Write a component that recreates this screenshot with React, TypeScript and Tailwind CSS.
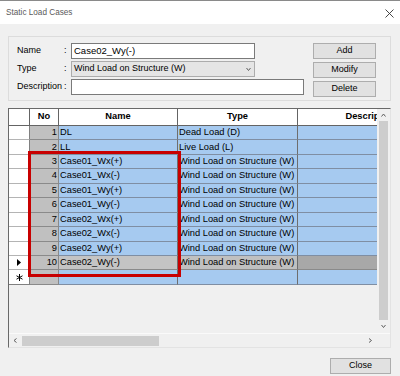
const rows = [
  { no: 1, name: "DL", type: "Dead Load (D)" },
  { no: 2, name: "LL", type: "Live Load (L)" },
  { no: 3, name: "Case01_Wx(+)", type: "Wind Load on Structure (W)" },
  { no: 4, name: "Case01_Wx(-)", type: "Wind Load on Structure (W)" },
  { no: 5, name: "Case01_Wy(+)", type: "Wind Load on Structure (W)" },
  { no: 6, name: "Case01_Wy(-)", type: "Wind Load on Structure (W)" },
  { no: 7, name: "Case02_Wx(+)", type: "Wind Load on Structure (W)" },
  { no: 8, name: "Case02_Wx(-)", type: "Wind Load on Structure (W)" },
  { no: 9, name: "Case02_Wy(+)", type: "Wind Load on Structure (W)" },
  { no: 10, name: "Case02_Wy(-)", type: "Wind Load on Structure (W)", sel: true },
];

function Chevron({ dir, className }: { dir: "up" | "down" | "left" | "right"; className?: string }) {
  const d = {
    up: "M0.5 3.5 L2.5 1 L4.5 3.5",
    down: "M0.5 1 L2.5 3.5 L4.5 1",
    left: "M3.5 0.5 L1 2.5 L3.5 4.5",
    right: "M1 0.5 L3.5 2.5 L1 4.5",
  }[dir];
  return (
    <svg width="5" height="5" viewBox="0 0 5 5" className={className}>
      <path d={d} fill="none" stroke="#606060" strokeWidth="1" />
    </svg>
  );
}

function Btn({ label, className }: { label: string; className?: string }) {
  return (
    <div
      className={`h-[16px] bg-[#e1e1e1] border border-[#adadad] flex items-center justify-center text-[9px] text-black ${className ?? ""}`}
    >
      {label}
    </div>
  );
}

export default function App() {
  return (
    <div className="w-[400px] h-[376px] bg-[#f0f0f0] flex flex-col overflow-hidden border-t border-[#8a8a8a] font-['Liberation_Sans',Arial,sans-serif]">
      {/* title bar */}
      <div className="h-[23px] bg-white flex items-center justify-between pl-[6px] pr-[6px] shrink-0">
        <span className="text-[8.2px] text-[#5a5a5a] mt-[1px]">Static Load Cases</span>
        <svg width="9" height="9" viewBox="0 0 9 9" className="mt-[1px]">
          <path d="M0.5 0.5 L8.5 8.5 M8.5 0.5 L0.5 8.5" stroke="#333" strokeWidth="0.9" />
        </svg>
      </div>

      <div className="flex-1 flex flex-col pl-[8px] pr-[9px]">
        {/* input group */}
        <div className="mt-[12px] h-[65px] border border-[#dcdcdc] flex pt-[6px] pl-[8px] pr-[14px]">
          <div className="flex flex-col gap-[2px] text-[9px] text-black">
            <div className="h-[16px] flex items-center">
              <span className="w-[47px]">Name</span>
              <span className="w-[7px]">:</span>
              <div className="w-[184px] h-[16px] bg-white border border-[#7a7a7a] flex items-center pl-[2px] text-[9.5px]">
                Case02_Wy(-)
              </div>
            </div>
            <div className="h-[16px] flex items-center">
              <span className="w-[47px]">Type</span>
              <span className="w-[7px]">:</span>
              <div className="w-[184px] h-[16px] bg-[#e5e5e5] border border-[#acacac] flex items-center justify-between pl-[2px] pr-[3px]">
                <span>Wind Load on Structure (W)</span>
                <Chevron dir="down" />
              </div>
            </div>
            <div className="h-[16px] flex items-center">
              <span className="w-[47px]">Description</span>
              <span className="w-[7px]">:</span>
              <div className="w-[233px] h-[16px] bg-white border border-[#7a7a7a]" />
            </div>
          </div>
          <div className="ml-auto flex flex-col gap-[3px] w-[63px]">
            <Btn label="Add" />
            <Btn label="Modify" />
            <Btn label="Delete" />
          </div>
        </div>

        {/* grid */}
        <div className="relative mt-[7px] h-[240px] border-t border-l border-[#696969] border-r border-b border-r-[#e3e3e3] border-b-[#e3e3e3] flex flex-col">
          <div className="flex h-[224px]">
            <div className="flex-1 overflow-hidden text-[9.3px] text-black">
              {/* header */}
              <div className="flex h-[17px]">
                <div className="w-[21px] shrink-0 bg-white border-r border-b border-[#646464]" />
                <div className="w-[29px] shrink-0 bg-white border-r border-b border-[#646464] flex items-center justify-center font-bold">No</div>
                <div className="w-[119px] shrink-0 bg-white border-r border-b border-[#646464] flex items-center justify-center font-bold">Name</div>
                <div className="w-[120px] shrink-0 bg-white border-r border-b border-[#646464] flex items-center justify-center font-bold">Type</div>
                <div className="w-[147px] shrink-0 bg-white border-r border-b border-[#646464] flex items-center justify-center font-bold">Description</div>
              </div>
              {rows.map((r) => (
                <div key={r.no} className="flex h-[14.44px] leading-none">
                  <div className="w-[21px] shrink-0 bg-white border-r border-b border-r-[#808080] border-b-[#b4b4b4] flex items-center justify-center">
                    {r.sel && (
                      <svg width="4" height="7" viewBox="0 0 4 7">
                        <path d="M0 0 L4 3.5 L0 7 Z" fill="#000" />
                      </svg>
                    )}
                  </div>
                  <div className="w-[29px] shrink-0 bg-[#c0c0c0] border-r border-b border-[#8a8a8a] flex items-center justify-end pr-[1px]">
                    {r.no}
                  </div>
                  <div
                    className={
                      r.sel
                        ? "w-[119px] shrink-0 bg-[#c4c4c4] border-r border-b border-r-[#6e6e6e] border-b-[#8a8a8a] flex items-center pl-[1px]"
                        : "w-[119px] shrink-0 bg-[#a6caf0] border-r border-b border-r-[#6e6e6e] border-b-[#7f8ea3] flex items-center pl-[1px]"
                    }
                  >
                    {r.name}
                  </div>
                  <div
                    className={
                      r.sel
                        ? "w-[120px] shrink-0 bg-[#c0c0c0] border-r border-b border-r-[#6e6e6e] border-b-[#8a8a8a] flex items-center pl-[1px] whitespace-nowrap"
                        : "w-[120px] shrink-0 bg-[#a6caf0] border-r border-b border-r-[#6e6e6e] border-b-[#7f8ea3] flex items-center pl-[1px] whitespace-nowrap"
                    }
                  >
                    {r.type}
                  </div>
                  <div
                    className={
                      r.sel
                        ? "w-[147px] shrink-0 bg-[#a8a8a8] border-r border-b border-[#8a8a8a]"
                        : "w-[147px] shrink-0 bg-[#a6caf0] border-r border-b border-r-[#6e6e6e] border-b-[#7f8ea3]"
                    }
                  />
                </div>
              ))}
              {/* new row */}
              <div className="flex h-[14.44px] leading-none">
                <div className="w-[21px] shrink-0 bg-white border-r border-b border-r-[#808080] border-b-[#808080] flex items-center justify-center">
                  <svg width="7" height="7" viewBox="0 0 7 7">
                    <path d="M3.5 0 V7 M0.5 1.8 L6.5 5.2 M6.5 1.8 L0.5 5.2" stroke="#000" strokeWidth="1" />
                  </svg>
                </div>
                <div className="w-[29px] shrink-0 bg-[#c0c0c0] border-r border-b border-[#8a8a8a]" />
                <div className="w-[119px] shrink-0 bg-[#a6caf0] border-r border-b border-r-[#6e6e6e] border-b-[#7f8ea3]" />
                <div className="w-[120px] shrink-0 bg-[#a6caf0] border-r border-b border-r-[#6e6e6e] border-b-[#7f8ea3]" />
                <div className="w-[147px] shrink-0 bg-[#a6caf0] border-r border-b border-r-[#6e6e6e] border-b-[#7f8ea3]" />
              </div>
            </div>
            {/* vertical scrollbar */}
            <div className="w-[13px] shrink-0 flex flex-col items-center bg-[#f0f0f0]">
              <div className="h-[12px] flex items-center justify-center">
                <Chevron dir="up" />
              </div>
              <div className="w-[9px] h-[199px] bg-[#cdcdcd]" />
              <div className="flex-1 flex items-center justify-center">
                <Chevron dir="down" />
              </div>
            </div>
          </div>
          {/* horizontal scrollbar */}
          <div className="flex h-[14px] border-t border-[#fafafa]">
            <div className="flex-1 flex items-center">
              <div className="w-[13px] flex items-center justify-center">
                <Chevron dir="left" />
              </div>
              <div className="w-[137px] h-[10px] bg-[#cdcdcd]" />
              <div className="flex-1" />
              <div className="w-[13px] flex items-center justify-center">
                <Chevron dir="right" />
              </div>
            </div>
            <div className="w-[13px] shrink-0 bg-[#f0f0f0]" />
          </div>

          {/* red highlight */}
          <div className="absolute left-[19px] top-[42px] w-[153px] h-[126px] border-[3px] border-[#c80000]" />
        </div>

        <div className="mt-[10px] flex justify-end">
          <Btn label="Close" className="w-[61px]" />
        </div>
      </div>
    </div>
  );
}
